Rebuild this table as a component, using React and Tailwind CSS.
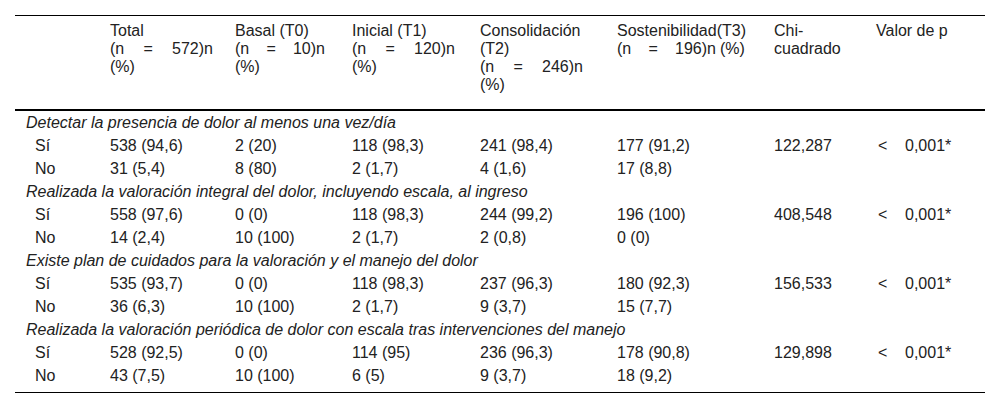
const cols = 'grid grid-cols-[95px_125px_117px_128px_137px_157px_102px_109px]';

const groups = [
  {
    title: 'Detectar la presencia de dolor al menos una vez/día',
    rows: [
      ['Sí', '538 (94,6)', '2 (20)', '118 (98,3)', '241 (98,4)', '177 (91,2)', '122,287', true],
      ['No', '31 (5,4)', '8 (80)', '2 (1,7)', '4 (1,6)', '17 (8,8)', '', false],
    ],
  },
  {
    title: 'Realizada la valoración integral del dolor, incluyendo escala, al ingreso',
    rows: [
      ['Sí', '558 (97,6)', '0 (0)', '118 (98,3)', '244 (99,2)', '196 (100)', '408,548', true],
      ['No', '14 (2,4)', '10 (100)', '2 (1,7)', '2 (0,8)', '0 (0)', '', false],
    ],
  },
  {
    title: 'Existe plan de cuidados para la valoración y el manejo del dolor',
    rows: [
      ['Sí', '535 (93,7)', '0 (0)', '118 (98,3)', '237 (96,3)', '180 (92,3)', '156,533', true],
      ['No', '36 (6,3)', '10 (100)', '2 (1,7)', '9 (3,7)', '15 (7,7)', '', false],
    ],
  },
  {
    title: 'Realizada la valoración periódica de dolor con escala tras intervenciones del manejo',
    rows: [
      ['Sí', '528 (92,5)', '0 (0)', '114 (95)', '236 (96,3)', '178 (90,8)', '129,898', true],
      ['No', '43 (7,5)', '10 (100)', '6 (5)', '9 (3,7)', '18 (9,2)', '', false],
    ],
  },
];

// "(n = 572)n" spread across the cell width, like the justified source text
const NLine = ({ n, w }) => (
  <div className={`flex justify-between ${w}`}>
    <span>(n</span>
    <span>=</span>
    <span>{n})n</span>
  </div>
);

export default function App() {
  return (
    <div className="h-[409px] w-[1000px] bg-white px-[15px] pt-[15px] font-['Liberation_Sans',Arial,sans-serif] text-[16px] text-[#222]">
      <div className="border-t border-black">
        <div className={`${cols} border-b-2 border-black pt-[6px] pb-[15px] leading-[18px]`}>
          <div />
          <div>
            <div>Total</div>
            <NLine n="572" w="w-[103px]" />
            <div>(%)</div>
          </div>
          <div>
            <div>Basal (T0)</div>
            <NLine n="10" w="w-[90px]" />
            <div>(%)</div>
          </div>
          <div>
            <div>Inicial (T1)</div>
            <NLine n="120" w="w-[103px]" />
            <div>(%)</div>
          </div>
          <div>
            <div>Consolidación</div>
            <div>(T2)</div>
            <NLine n="246" w="w-[103px]" />
            <div>(%)</div>
          </div>
          <div>
            <div>Sostenibilidad(T3)</div>
            <div className="flex">
              <NLine n="196" w="w-[99px]" />
              <span className="ml-[4px]">(%)</span>
            </div>
          </div>
          <div>
            <div>Chi-</div>
            <div>cuadrado</div>
          </div>
          <div>Valor de p</div>
        </div>

        <div className="border-b border-black pb-[5px]">
          {groups.map((g) => (
            <div key={g.title}>
              <div className="flex h-[23px] items-center pl-[11px] italic">{g.title}</div>
              {g.rows.map((r) => (
                <div key={r[0]} className={`${cols} h-[23px] items-center`}>
                  <div className="pl-[20px]">{r[0]}</div>
                  <div>{r[1]}</div>
                  <div>{r[2]}</div>
                  <div>{r[3]}</div>
                  <div>{r[4]}</div>
                  <div>{r[5]}</div>
                  <div>{r[6]}</div>
                  <div className="flex">
                    {r[7] && (
                      <>
                        <span className="w-[29px] pl-[2px]">&lt;</span>
                        <span>0,001*</span>
                      </>
                    )}
                  </div>
                </div>
              ))}
            </div>
          ))}
        </div>
      </div>
    </div>
  );
}
